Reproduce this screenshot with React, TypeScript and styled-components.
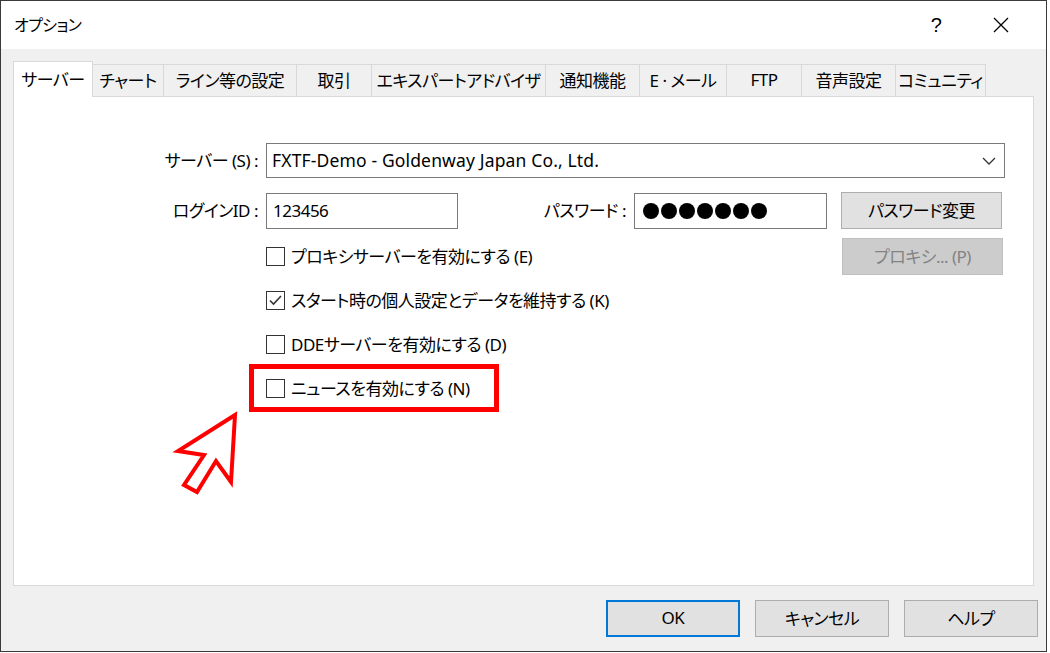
import React from "react";
import styled, { createGlobalStyle } from "styled-components";

const Global = createGlobalStyle`
  html, body { margin: 0; padding: 0; background: #ffffff; }
  body {
    font-family: "Noto Sans", "Noto Sans CJK JP", sans-serif;
    font-size: 17px;
    letter-spacing: -0.5px;
    color: #000;
    font-feature-settings: "palt";
  }
  * { box-sizing: border-box; }
`;

const Window = styled.div`
  width: 1047px;
  height: 652px;
  border: 1px solid #3a3a3a;
  background: #f0f0f0;
  display: flex;
  flex-direction: column;
  position: relative;
  overflow: hidden;
`;

const TitleBar = styled.div`
  height: 48px;
  background: #fff;
  display: flex;
  align-items: center;
  padding-left: 13px;
  flex-shrink: 0;
`;

const Title = styled.div`
  flex: 1;
  font-size: 16px;
  letter-spacing: -0.6px;
  padding-bottom: 2px;
`;

const TitleButton = styled.div<{ $w: number }>`
  width: ${(p) => p.$w}px;
  height: 48px;
  display: flex;
  align-items: center;
  justify-content: center;
  font-size: 20px;
  font-family: "Liberation Sans", sans-serif;
`;

const Body = styled.div`
  flex: 1;
  display: flex;
  flex-direction: column;
  padding: 12px 12px 0 12px;
`;

const TabStrip = styled.div`
  display: flex;
  align-items: flex-end;
  height: 36px;
  position: relative;
  z-index: 1;
  margin-bottom: -1px;
`;

const Tab = styled.div<{ $w: number; $active?: boolean }>`
  width: ${(p) => p.$w}px;
  height: ${(p) => (p.$active ? 36 : 33)}px;
  display: flex;
  align-items: center;
  justify-content: center;
  background: ${(p) => (p.$active ? "#fff" : "#f0f0f0")};
  border: 1px solid #d9d9d9;
  border-bottom: ${(p) => (p.$active ? "none" : "1px solid #d9d9d9")};
  margin-left: -1px;
  padding-bottom: 2px;
  white-space: pre;
  &:first-child { margin-left: 0; }
`;

const Panel = styled.div`
  width: 1021px;
  height: 490px;
  background: #fff;
  border: 1px solid #d9d9d9;
  position: relative;
  padding: 46px 0 0 0;
  display: flex;
  flex-direction: column;
`;

const Row = styled.div<{ $mt?: number }>`
  display: flex;
  align-items: center;
  margin-top: ${(p) => p.$mt ?? 0}px;
`;

const Label = styled.div<{ $w: number }>`
  width: ${(p) => p.$w}px;
  text-align: right;
  padding-right: 8px;
  white-space: nowrap;
  flex-shrink: 0;
  padding-bottom: 2px;
`;

const Combo = styled.div`
  width: 739px;
  height: 35px;
  border: 1px solid #7a7a7a;
  display: flex;
  align-items: center;
  padding-left: 5px;
  padding-right: 8px;
  justify-content: space-between;
`;

const ComboText = styled.span`
  font-size: 17.5px;
  letter-spacing: 0.15px;
  padding-bottom: 2px;
`;

const Input = styled.div<{ $w: number }>`
  width: ${(p) => p.$w}px;
  height: 36px;
  border: 1px solid #7a7a7a;
  display: flex;
  align-items: center;
  padding-left: 6px;
  flex-shrink: 0;
`;

const Dots = styled.div`
  display: flex;
  gap: 2px;
  padding-left: 2px;
`;

const Dot = styled.span`
  width: 16px;
  height: 16px;
  border-radius: 50%;
  background: #000;
  display: block;
`;

const Button = styled.div<{ $w: number; $disabled?: boolean; $default?: boolean }>`
  width: ${(p) => p.$w}px;
  height: 37px;
  display: flex;
  align-items: center;
  justify-content: center;
  background: ${(p) => (p.$disabled ? "#cccccc" : "#e1e1e1")};
  border: ${(p) => (p.$default ? "2px solid #0078d7" : p.$disabled ? "1px solid #bfbfbf" : "1px solid #adadad")};
  color: ${(p) => (p.$disabled ? "#838383" : "#000")};
  flex-shrink: 0;
  white-space: nowrap;
  padding-bottom: 2px;
`;

const Checks = styled.div`
  display: flex;
  flex-direction: column;
  gap: 8px;
  padding-left: 252px;
  margin-top: 9px;
  padding-right: 30px;
`;

const CheckRow = styled.div`
  height: 36px;
  display: flex;
  align-items: center;
  gap: 6px;
`;

const CheckText = styled.span`
  padding-bottom: 2px;
`;

const Box = styled.span`
  width: 19px;
  height: 19px;
  border: 1px solid #333;
  background: #fff;
  display: flex;
  align-items: center;
  justify-content: center;
  flex-shrink: 0;
`;

const Highlight = styled.div`
  width: 250px;
  height: 48px;
  border: 5px solid #ff0000;
  margin-left: -17px;
  margin-top: -6px;
  padding-left: 12px;
  display: flex;
  align-items: center;
  gap: 6px;
`;

const Arrow = styled.svg`
  position: absolute;
  left: 0;
  top: 0;
  pointer-events: none;
`;

const Footer = styled.div`
  display: flex;
  justify-content: flex-end;
  gap: 15px;
  padding-top: 14px;
  margin-right: -4px;
`;

const Spacer = styled.div<{ $max?: number }>`
  flex: 1;
  max-width: ${(p) => (p.$max ? `${p.$max}px` : "none")};
`;

const tabs: [string, number][] = [
  ["サーバー", 80],
  ["チャート", 72],
  ["ライン等の設定", 134],
  ["取引", 76],
  ["エキスパートアドバイザ", 175],
  ["通知機能", 95],
  ["E · メール", 88],
  ["FTP", 76],
  ["音声設定", 95],
  ["コミュニティ", 91],
];

const Check: React.FC<{ checked?: boolean }> = ({ checked }) => (
  <Box>
    {checked && (
      <svg width="15" height="15" viewBox="0 0 15 15">
        <polyline points="2,7.5 5.5,11 13,3" fill="none" stroke="#333" strokeWidth="1.6" />
      </svg>
    )}
  </Box>
);

export default function App() {
  return (
    <>
      <Global />
      <Window>
        <TitleBar>
          <Title>オプション</Title>
          <TitleButton $w={40}>?</TitleButton>
          <TitleButton $w={90}>
            <svg width="16" height="16" viewBox="0 0 16 16">
              <path d="M1 1 L15 15 M15 1 L1 15" stroke="#000" strokeWidth="1.3" />
            </svg>
          </TitleButton>
        </TitleBar>
        <Body>
          <TabStrip>
            {tabs.map(([t, w], i) => (
              <Tab key={t} $w={w} $active={i === 0}>
                {t}
              </Tab>
            ))}
          </TabStrip>
          <Panel>
            <Row>
              <Label $w={252}>サーバー (S) :</Label>
              <Combo>
                <ComboText>FXTF-Demo - Goldenway Japan Co., Ltd.</ComboText>
                <svg width="14" height="8" viewBox="0 0 14 8">
                  <polyline points="1,1 7,7 13,1" fill="none" stroke="#333" strokeWidth="1.3" />
                </svg>
              </Combo>
            </Row>
            <Row $mt={14}>
              <Label $w={252}>ログインID :</Label>
              <Input $w={192}>123456</Input>
              <Label $w={176}>パスワード :</Label>
              <Input $w={193}>
                <Dots>
                  {Array.from({ length: 7 }).map((_, i) => (
                    <Dot key={i} />
                  ))}
                </Dots>
              </Input>
              <Spacer $max={14} />
              <Button $w={161}>パスワード変更</Button>
            </Row>
            <Checks>
              <CheckRow>
                <Check />
                <CheckText>プロキシサーバーを有効にする (E)</CheckText>
                <Spacer />
                <Button $w={161} $disabled>
                  プロキシ... (P)
                </Button>
              </CheckRow>
              <CheckRow>
                <Check checked />
                <CheckText>スタート時の個人設定とデータを維持する (K)</CheckText>
              </CheckRow>
              <CheckRow>
                <Check />
                <CheckText>DDEサーバーを有効にする (D)</CheckText>
              </CheckRow>
              <Highlight>
                <Check />
                <CheckText>ニュースを有効にする (N)</CheckText>
              </Highlight>
            </Checks>
            <Arrow width="300" height="420" viewBox="0 0 300 420">
              <polygon
                points="221,318 164,354 190,358 170,388 183,395 202,364 217,385"
                fill="#fff"
                stroke="#ff0000"
                strokeWidth="4"
                strokeLinejoin="miter"
              />
            </Arrow>
          </Panel>
          <Footer>
            <Button $w={134} $default>
              OK
            </Button>
            <Button $w={134}>キャンセル</Button>
            <Button $w={134}>ヘルプ</Button>
          </Footer>
        </Body>
      </Window>
    </>
  );
}
